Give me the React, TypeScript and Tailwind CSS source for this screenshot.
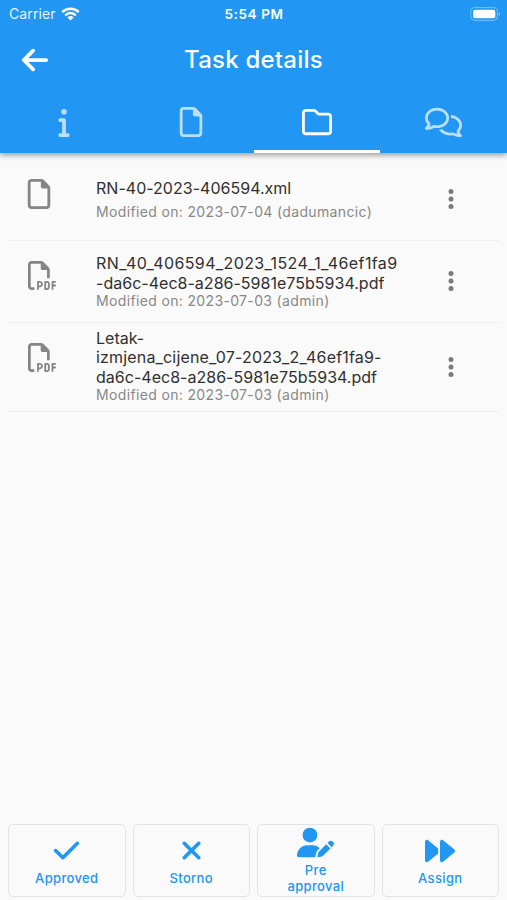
import React, { useState } from 'react'
import {
  FaArrowLeft,
  FaCheck,
  FaForward,
  FaInfo,
  FaRegComments,
  FaRegFile,
  FaRegFilePdf,
  FaRegFolder,
  FaUserPen,
  FaXmark
} from 'react-icons/fa6'

interface TaskFile {
  id: number
  lines: { text: string; className: string }[]
  modified: string
  type: 'pdf' | 'other'
  rowClass: string
  titleClass: string
}

const files: TaskFile[] = [
  {
    id: 1,
    lines: [{ text: 'RN-40-2023-406594.xml', className: 'tracking-[0.02px]' }],
    modified: 'Modified on: 2023-07-04 (dadumancic)',
    type: 'other',
    rowClass: 'h-[83px]',
    titleClass: 'pt-[21px] pb-[5.5px]'
  },
  {
    id: 2,
    lines: [
      { text: 'RN_40_406594_2023_1524_1_46ef1fa9', className: 'tracking-[0.39px]' },
      { text: '-da6c-4ec8-a286-5981e75b5934.pdf', className: 'tracking-[0.02px]' }
    ],
    modified: 'Modified on: 2023-07-03 (admin)',
    type: 'pdf',
    rowClass: 'h-[82px]',
    titleClass: 'pt-[13px]'
  },
  {
    id: 3,
    lines: [
      { text: 'Letak-', className: 'tracking-[0.02px]' },
      { text: 'izmjena_cijene_07-2023_2_46ef1fa9-', className: 'tracking-[0.17px]' },
      { text: 'da6c-4ec8-a286-5981e75b5934.pdf', className: 'tracking-[0.02px]' }
    ],
    modified: 'Modified on: 2023-07-03 (admin)',
    type: 'pdf',
    rowClass: 'h-[89px]',
    titleClass: 'pt-[5.5px]'
  }
]

const tabs = [
  { key: 'info', icon: <FaInfo size={30} className="ml-[2px]" /> },
  { key: 'document', icon: <FaRegFile size={30} className="ml-px" /> },
  { key: 'files', icon: <FaRegFolder size={30} /> },
  { key: 'comments', icon: <FaRegComments size={37} /> }
]

const actions = [
  { label: 'Approved', icon: <FaCheck size={29} /> },
  { label: 'Storno', icon: <FaXmark size={29} /> },
  { label: 'Pre approval', icon: <FaUserPen size={37} /> },
  { label: 'Assign', icon: <FaForward size={30} /> }
]

const StatusBar: React.FC = () => (
  <div className="grid h-7 grid-cols-3 items-center pl-[9px] pr-[6px] leading-none text-white">
    <div className="flex items-center gap-[5px]">
      <span className="text-[14px] tracking-[0.1px] opacity-90">Carrier</span>
      <svg width="19" height="14" viewBox="0 0 19 14" fill="none" stroke="currentColor" strokeWidth="2.5">
        <path d="M1.2 5.2a11.8 11.8 0 0 1 16.6 0" />
        <path d="M4.2 8.3a7.5 7.5 0 0 1 10.6 0" />
        <path d="M6.4 10.4a4.4 4.4 0 0 1 6.2 0L9.5 13.6z" fill="currentColor" stroke="none" />
      </svg>
    </div>
    <span className="pr-[2px] pt-px text-center text-[13.5px] font-semibold tracking-[0.6px]">5:54 PM</span>
    <svg className="ml-auto" width="31" height="14" viewBox="0 0 31 14" fill="none">
      <rect x="0.8" y="0.6" width="26.6" height="12.8" rx="4" stroke="white" strokeOpacity="0.4" />
      <rect x="3" y="2.7" width="22.3" height="8.6" rx="2" fill="white" />
      <path d="M28.8 5v4c1.4-.5 1.4-3.5 0-4z" fill="white" fillOpacity="0.5" />
    </svg>
  </div>
)

const App: React.FC = () => {
  const [activeTab, setActiveTab] = useState('files')

  return (
    <div className="flex h-[900px] w-[507px] flex-col bg-[#fafafa] font-['Inter','Liberation_Sans',sans-serif]">
      {/* Header */}
      <header className="z-10 h-[152.5px] shrink-0 bg-[#2196f3] shadow-[0_2px_6px_rgba(0,0,0,0.4)]">
        <StatusBar />
        <div className="grid h-16 grid-cols-[70px_1fr_70px] items-center text-white">
          <button className="pl-5" aria-label="Back">
            <FaArrowLeft size={30} />
          </button>
          <h1 className="text-center text-[24px] font-medium leading-8 tracking-[0.22px]">Task details</h1>
        </div>
        <nav className="grid h-[60.5px] grid-cols-4">
          {tabs.map(tab => (
            <button
              key={tab.key}
              onClick={() => setActiveTab(tab.key)}
              aria-label={tab.key}
              className={`flex items-center justify-center border-b-[3px] pt-[3px] ${
                activeTab === tab.key ? 'border-white text-white' : 'border-transparent text-[#bbdffb]'
              }`}
            >
              {tab.icon}
            </button>
          ))}
        </nav>
      </header>

      {/* Files */}
      <main className="flex-1 px-2 pt-[5.5px]">
        {files.map(file => (
          <div key={file.id} className={`flex border-b border-[#eeeeee] ${file.rowClass}`}>
            <div className="w-[88px] shrink-0 pl-5 text-[#858585]">
              {file.type === 'pdf' ? (
                <FaRegFilePdf size={29} className="mt-[20px]" />
              ) : (
                <FaRegFile size={30} className="-ml-1 mt-[21px]" />
              )}
            </div>
            <div className="flex-1 whitespace-nowrap">
              <div className={`text-[16px] leading-[19.5px] text-[#303030] ${file.titleClass}`}>
                {file.lines.map(line => (
                  <div key={line.text} className={line.className}>{line.text}</div>
                ))}
              </div>
              <div className="text-[14px] leading-4 tracking-[0.35px] text-[#888888]">{file.modified}</div>
            </div>
            <button className="flex w-[97px] items-center justify-center pb-px text-[#7b7b7b]" aria-label="More">
              <svg width="6" height="22" viewBox="0 0 6 22" fill="currentColor">
                <circle cx="3" cy="3.5" r="2.5" />
                <circle cx="3" cy="11" r="2.5" />
                <circle cx="3" cy="18.5" r="2.5" />
              </svg>
            </button>
          </div>
        ))}
      </main>

      {/* Actions */}
      <footer className="grid grid-cols-4 gap-[7px] px-2 pb-[3px]">
        {actions.map(action => (
          <button
            key={action.label}
            className="flex h-[73px] flex-col items-center justify-center gap-1 rounded-[5px] border-[1.5px] border-[#e3e3e3] text-[#2196f3]"
          >
            <span className="flex h-[31px] items-center">{action.icon}</span>
            <span className="w-[70px] text-center text-[13px] font-medium leading-4 tracking-[0.35px]">
              {action.label}
            </span>
          </button>
        ))}
      </footer>
    </div>
  )
}

export default App
